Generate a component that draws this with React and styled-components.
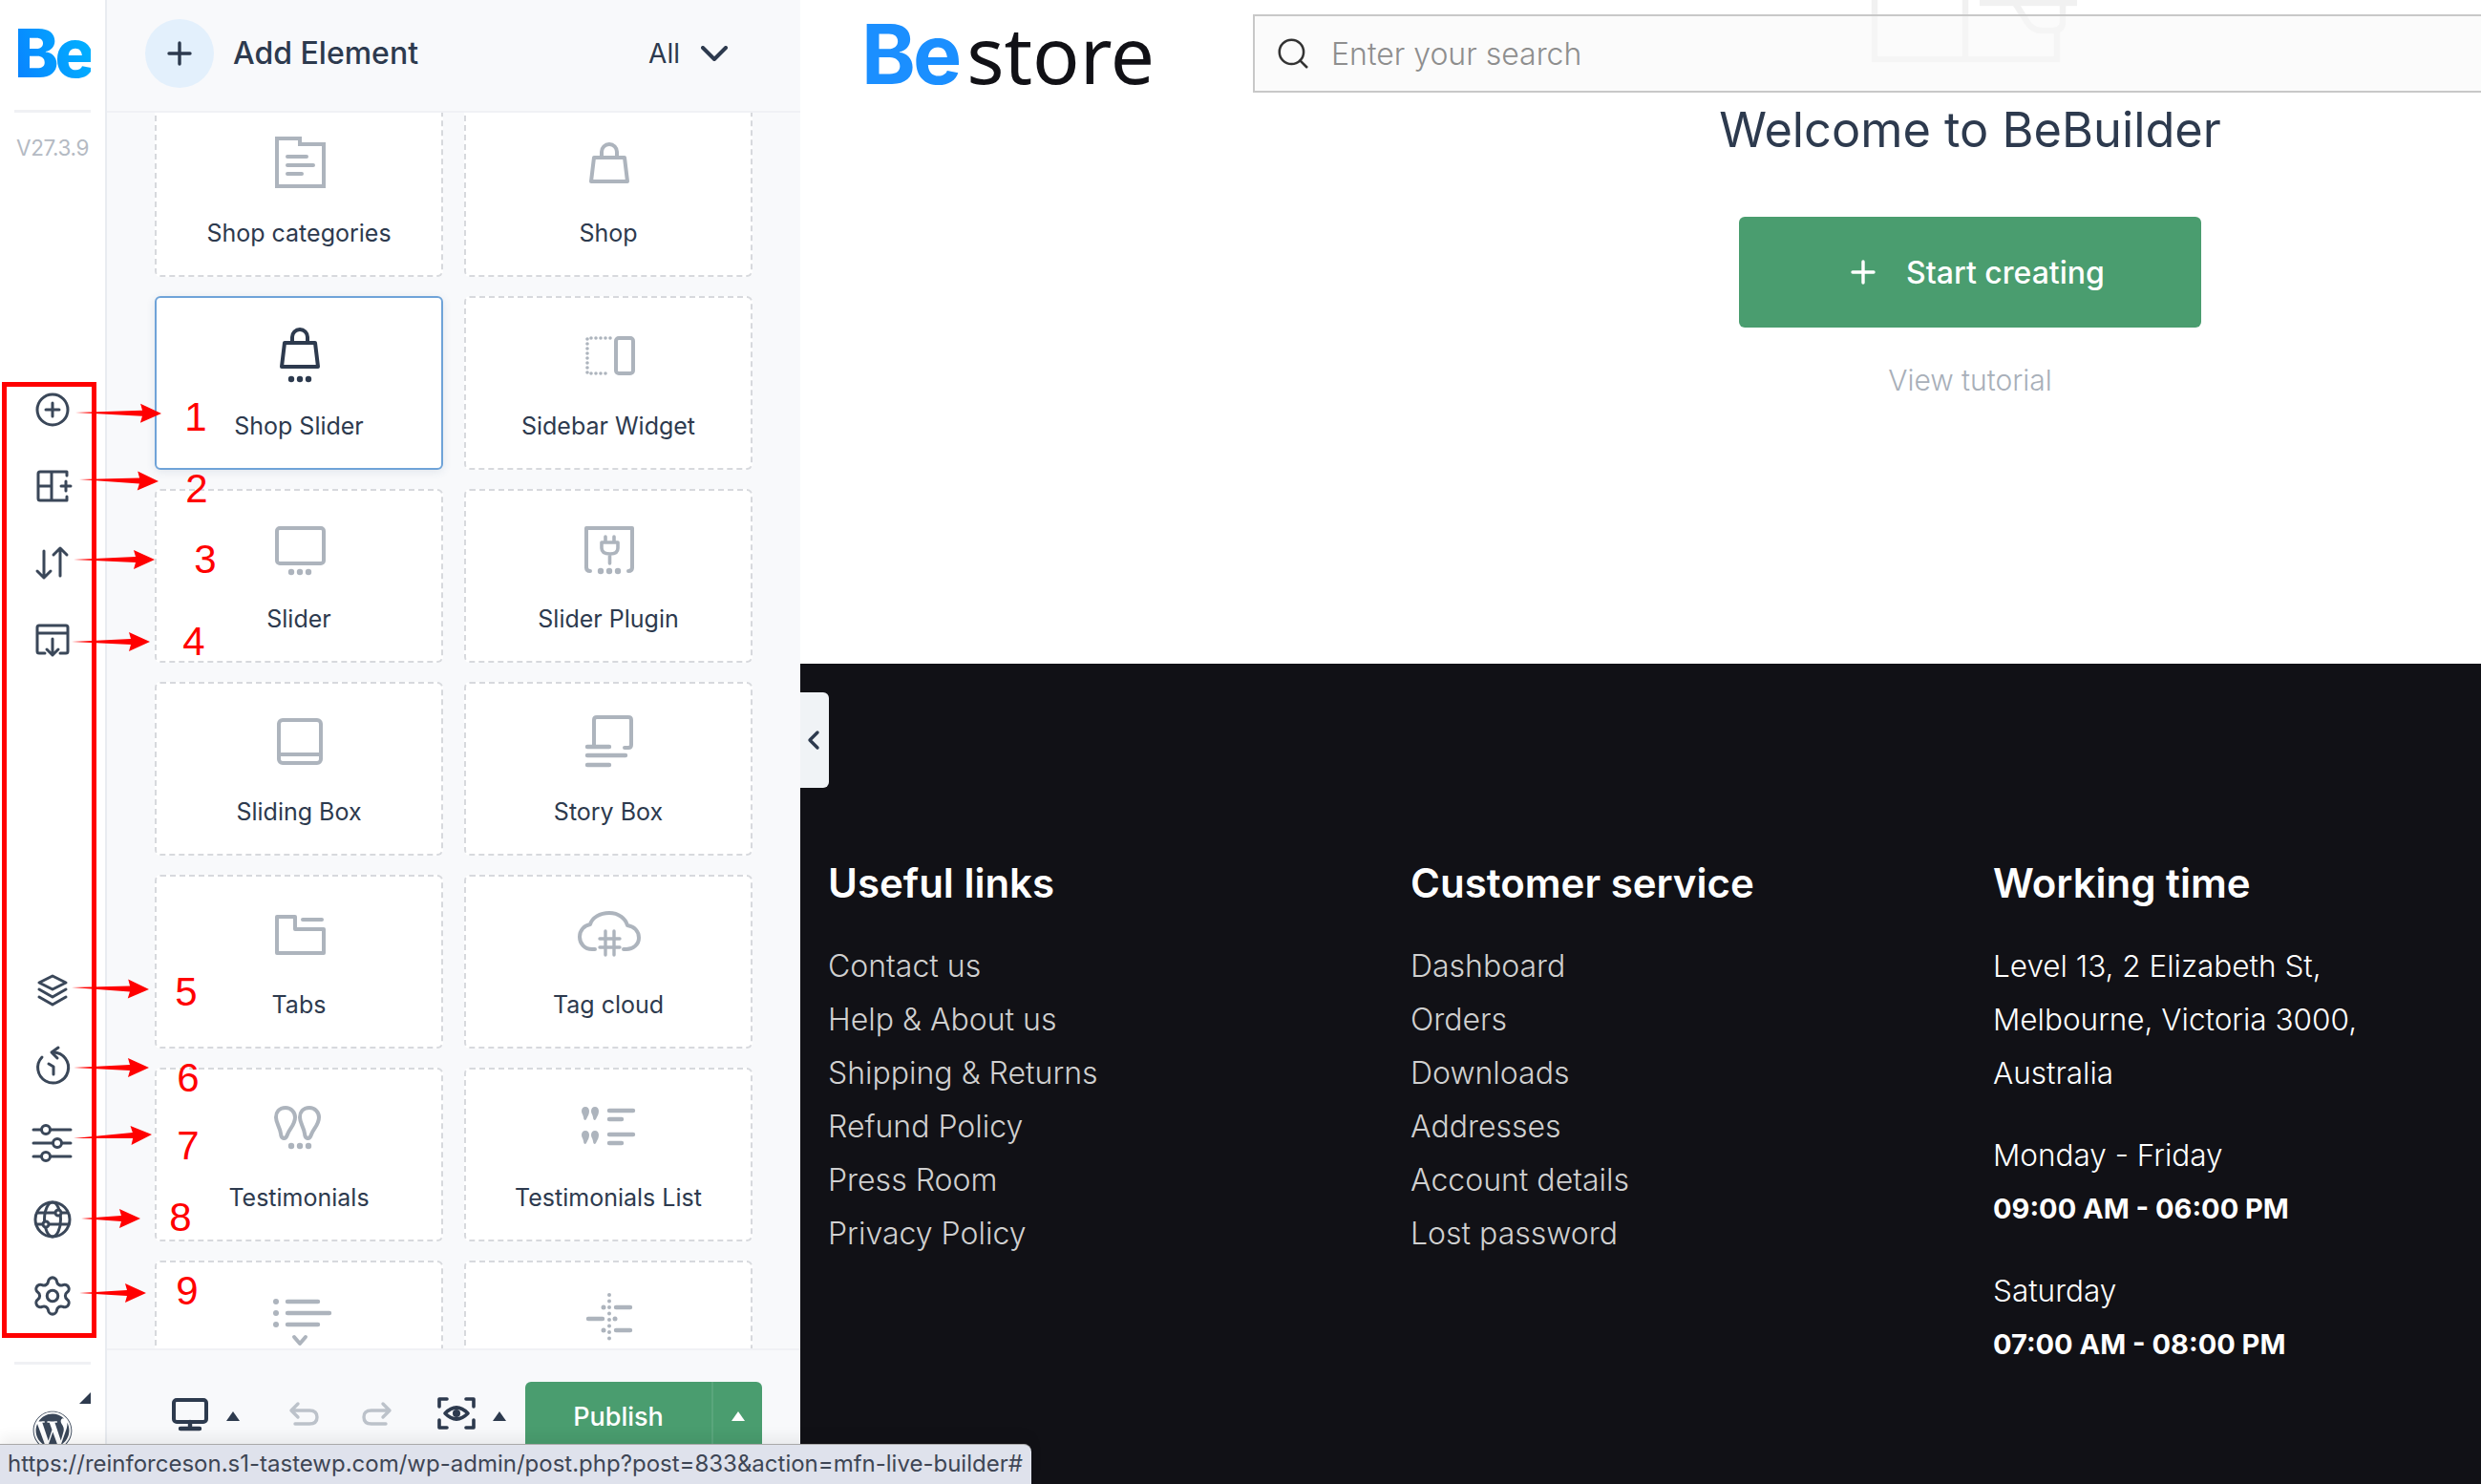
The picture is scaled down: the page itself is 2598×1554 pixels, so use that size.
import React from 'react';
import styled, { createGlobalStyle } from 'styled-components';
import { Settings, Search } from 'lucide-react';
import { FaWordpress } from 'react-icons/fa';

const GlobalStyle = createGlobalStyle`
  html, body {
    margin: 0;
    padding: 0;
    overflow: hidden;
    background: #fff;
  }
  body {
    font-family: Inter, "Noto Sans", sans-serif;
    color: #2d3a4e;
  }
  * {
    box-sizing: border-box;
  }
`;

const Page = styled.div`
  position: relative;
  display: flex;
  width: 2598px;
  height: 1554px;
  overflow: hidden;
`;

/* left icon rail */
const Rail = styled.aside`
  display: flex;
  flex-direction: column;
  align-items: center;
  flex: none;
  width: 112px;
  background: #fff;
  border-right: 2px solid #e9ecf1;
`;

const RailLogo = styled.div`
  width: 80px;
  height: 118px;
  padding-top: 14px;
  border-bottom: 3px solid #f0f1f4;
  text-align: center;
  font-size: 70px;
  line-height: 84px;
  font-weight: 800;
  letter-spacing: -4px;
  color: transparent;
  background: linear-gradient(70deg, #0a7cff, #00b6ff) content-box;
  background-clip: text;
  -webkit-background-clip: text;
`;

const Version = styled.div`
  margin-top: 23px;
  font-size: 22.5px;
  line-height: 28px;
  color: #b4bac3;
  letter-spacing: -0.4px;
`;

const RailGroup = styled.div`
  display: flex;
  flex-direction: column;
  margin-top: ${p => p.$top}px;
`;

const RailItem = styled.div`
  display: flex;
  align-items: center;
  justify-content: center;
  width: 80px;
  height: 80px;
  color: #3a4759;
`;

const RailDivider = styled.div`
  width: 80px;
  height: 3px;
  margin-top: 29px;
  background: #f0f1f4;
`;

const RailWp = styled.div`
  position: relative;
  display: flex;
  justify-content: center;
  width: 80px;
  margin-top: 48px;
  color: #3a4759;
`;

const CornerMark = styled.span`
  position: absolute;
  top: -19px;
  right: 0;
  border-style: solid;
  border-width: 0 12px 12px 0;
  border-color: transparent #2d3a4e transparent transparent;
  transform: rotate(90deg);
`;

/* element panel */
const Panel = styled.section`
  display: flex;
  flex-direction: column;
  flex: none;
  width: 726px;
  background: #f8f9fb;
`;

const PanelHeader = styled.header`
  display: flex;
  align-items: center;
  flex: none;
  height: 118px;
  padding: 0 76px 4px 40px;
  border-bottom: 2px solid #f0f1f5;
`;

const AddCircle = styled.span`
  display: flex;
  align-items: center;
  justify-content: center;
  width: 72px;
  height: 72px;
  border-radius: 50%;
  background: #e3f0fc;
`;

const PanelTitle = styled.span`
  margin-left: 20px;
  font-size: 32px;
  line-height: 44px;
  font-weight: 500;
  color: #2d3a4e;
`;

const FilterLabel = styled.span`
  margin-left: auto;
  font-size: 28px;
  line-height: 44px;
  color: #2d3a4e;
`;

const FilterChevron = styled.svg`
  margin-left: 22px;
`;

const ListViewport = styled.div`
  flex: 1;
  min-height: 0;
  overflow: hidden;
`;

const ElementGrid = styled.div`
  display: grid;
  grid-template-columns: repeat(2, 302px);
  grid-auto-rows: 182px;
  gap: 20px 22px;
  margin-top: -10px;
  padding-left: 50px;
`;

const ElementCard = styled.div`
  display: flex;
  flex-direction: column;
  align-items: center;
  padding-top: 30px;
  background: #fff;
  border-radius: 6px;
  border: 2px ${p => (p.$active ? 'solid #6fa3d8' : 'dashed #d7d9dd')};
  box-shadow: ${p => (p.$active ? '0 2px 10px rgba(60, 90, 130, 0.12)' : 'none')};
  color: ${p => (p.$active ? '#2d3a4e' : '#adb4bd')};
`;

const ElementLabel = styled.span`
  margin-top: 29px;
  font-size: 25px;
  line-height: 30px;
  color: #2d3a4e;
`;

const PanelFooter = styled.footer`
  display: flex;
  align-items: center;
  flex: none;
  height: 142px;
  padding: 34px 0 36px 68px;
  border-top: 2px solid #f0f1f5;
`;

const ToolButton = styled.span`
  display: flex;
  align-items: center;
  margin-left: ${p => p.$left || 0}px;
  color: ${p => (p.$muted ? '#bcc2ca' : '#2d3a4e')};
`;

const Caret = styled.span`
  display: block;
  width: 0;
  height: 0;
  margin-left: ${p => p.$left}px;
  border-style: solid;
  border-width: 0 7px 10px 7px;
  border-color: transparent transparent ${p => p.$color || '#2d3a4e'} transparent;
`;

const PublishGroup = styled.div`
  display: flex;
  align-items: stretch;
  width: 248px;
  height: 72px;
  margin-left: 20px;
  border-radius: 6px;
  background: #4a9d6f;
  color: #fff;
`;

const PublishLabel = styled.span`
  display: flex;
  align-items: center;
  justify-content: center;
  width: 195px;
  font-size: 27px;
  font-weight: 500;
`;

const PublishMenu = styled.span`
  display: flex;
  align-items: center;
  justify-content: center;
  flex: 1;
  border-left: 2px solid #5aa67c;
`;

/* site preview */
const Preview = styled.main`
  display: flex;
  flex-direction: column;
  flex: 1;
  min-width: 0;
`;

const Hero = styled.div`
  position: relative;
  flex: none;
  height: 695px;
  background: #fff;
`;

const SiteHeader = styled.div`
  display: flex;
  padding: 15px 0 0 64px;
`;

const SiteLogo = styled.div`
  flex: none;
  width: 410px;
  font-family: "Noto Sans", sans-serif;
  font-size: 82px;
  line-height: 82px;
  color: #111116;
`;

const LogoBe = styled.span`
  font-family: Inter, sans-serif;
  font-size: 86px;
  font-weight: 700;
  margin-right: 8px;
  letter-spacing: -3px;
  color: #1b8fff;
`;

const SearchBar = styled.div`
  position: relative;
  z-index: 1;
  display: flex;
  align-items: center;
  flex: none;
  width: 1340px;
  height: 82px;
  padding-left: 21px;
  background: rgba(248, 248, 248, 0.6);
  border: 2px solid #c8c8c8;
  color: #333;
`;

const SearchText = styled.span`
  margin-left: 21px;
  font-size: 32px;
  font-weight: 300;
  color: #8e8e8e;
`;

const Watermark = styled.svg`
  position: absolute;
  top: 0;
  left: 1112px;
  color: #f1f1f1;
`;

const HeroCopy = styled.div`
  display: flex;
  flex-direction: column;
  align-items: center;
  padding-left: 690px;
`;

const Welcome = styled.h1`
  margin: 0;
  font-size: 50.5px;
  line-height: 76px;
  font-weight: 400;
  color: #2d3a4e;
`;

const StartButton = styled.div`
  display: flex;
  align-items: center;
  justify-content: center;
  gap: 32px;
  width: 484px;
  height: 116px;
  margin-top: 53px;
  padding-left: 16px;
  border-radius: 6px;
  background: #4a9d6f;
  color: #fff;
  font-size: 32px;
  font-weight: 500;
`;

const TutorialLink = styled.div`
  margin-top: 31px;
  font-size: 30px;
  line-height: 48px;
  font-weight: 300;
  color: #a8afb9;
`;

const SiteFooter = styled.div`
  display: grid;
  grid-template-columns: repeat(3, 610px);
  flex: 1;
  padding: 200px 0 0 29px;
  background: #111116;
`;

const FooterHeading = styled.h4`
  margin: 0 0 29px;
  font-size: 42px;
  line-height: 60px;
  font-weight: 600;
  color: #fff;
`;

const FooterLink = styled.div`
  font-size: 32px;
  line-height: 56px;
  font-weight: 300;
  color: #d0d0d0;
`;

const FooterText = styled.div`
  margin-bottom: ${p => p.$gap || 0}px;
  font-size: ${p => (p.$strong ? 29 : 31.5)}px;
  line-height: 56px;
  font-weight: ${p => (p.$strong ? 700 : 300)};
  color: #fff;
`;

const CollapseHandle = styled.div`
  position: absolute;
  top: 725px;
  left: 838px;
  display: flex;
  align-items: center;
  justify-content: center;
  width: 30px;
  height: 100px;
  border-radius: 0 6px 6px 0;
  background: #f0f3f6;
  color: #2d3a4e;
`;

const StatusBar = styled.div`
  position: absolute;
  left: 0;
  bottom: 0;
  z-index: 5;
  width: 1080px;
  height: 42px;
  padding-left: 8px;
  border-top: 1px solid #a9a9a9;
  border-top-right-radius: 8px;
  background: #dfe2ec;
  box-shadow: 0 -8px 14px rgba(0, 0, 0, 0.06);
  font-size: 24px;
  line-height: 40px;
  white-space: nowrap;
  color: #3e4655;
`;

/* red markup drawn on top of the screenshot */
const MarkupBox = styled.div`
  position: absolute;
  top: 400px;
  left: 2px;
  z-index: 3;
  width: 99px;
  height: 1001px;
  border: 5px solid #ff0000;
`;

const MarkupArrows = styled.svg`
  position: absolute;
  top: 0;
  left: 0;
  z-index: 4;
`;

const MarkupNumber = styled.span`
  position: absolute;
  top: ${p => p.$y - 23}px;
  left: ${p => p.$x - 12}px;
  z-index: 4;
  width: 24px;
  font-family: "Liberation Sans", sans-serif;
  font-size: 42px;
  line-height: 46px;
  text-align: center;
  color: #ff0000;
`;

const Line = ({ size = 60, sw = 4, children, ...rest }) => (
  <svg width={size} height={size} viewBox={`0 0 ${size} ${size}`} fill="none" stroke="currentColor" strokeWidth={sw} strokeLinecap="round" strokeLinejoin="round" style={{ overflow: 'visible', flex: 'none' }} {...rest}>
    {children}
  </svg>
);

const Dots = ({ y = 55 }) => (
  <g fill="currentColor" stroke="none">
    <circle cx="22" cy={y} r="3.2" />
    <circle cx="31" cy={y} r="3.2" />
    <circle cx="40" cy={y} r="3.2" />
  </g>
);

const Bag = () => (
  <>
    <path d="M15 17H47L50 42H12Z" />
    <path d="M23 17V11a8 8 0 0 1 16 0V17" />
  </>
);

const Quote = ({ x, y }) => (
  <path transform={`translate(${x} ${y})`} d="M4 0C1.500 0 0 2 0 4.500C0 7 1.500 8 2 11C2.200 14.500 4.500 15 5.500 12C6.500 9.500 8 8 8 4.500C8 2 6.500 0 4 0Z" fill="currentColor" stroke="none" />
);

const elementIcons = {
  categories: (
    <Line>
      <path d="M7 5H31V11H56V55H7Z" strokeLinejoin="miter" />
      <path d="M18 24H38M18 33H45M18 42H33" />
    </Line>
  ),
  shop: <Line><g transform="translate(0 8)"><Bag /></g></Line>,
  shopSlider: <Line><Bag /><Dots /></Line>,
  sidebar: (
    <Line>
      <rect x="38" y="12" width="18" height="37" rx="3" />
      <path d="M32 12H8V49H32" strokeWidth="3.6" strokeDasharray="0 5" />
    </Line>
  ),
  slider: (
    <Line>
      <rect x="7" y="9" width="49" height="37" rx="3" />
      <Dots />
    </Line>
  ),
  sliderPlugin: (
    <Line>
      <path d="M7 50V9H55V50" />
      <path d="M7 50Q7 54 11 54M55 50Q55 54 51 54" />
      <path d="M27 18V24M36 18V24M23 24H40V30Q40 36 32 36Q23 36 23 30ZM31.500 36V46" strokeWidth="3.6" />
      <g fill="currentColor" stroke="none">
        <circle cx="22" cy="54" r="3.2" />
        <circle cx="31" cy="54" r="3.2" />
        <circle cx="40" cy="54" r="3.2" />
      </g>
    </Line>
  ),
  slidingBox: (
    <Line>
      <rect x="9" y="8" width="44" height="45" rx="4" />
      <path d="M9 44H53" />
    </Line>
  ),
  storyBox: (
    <Line>
      <path d="M15 34V8Q15 5 18 5H51Q54 5 54 8V34Q54 37 51 37H47" />
      <path d="M8 36H31M8 45H48M8 55H31" strokeWidth="4.4" />
    </Line>
  ),
  tabs: (
    <Line>
      <path d="M7 12H26V25H56V50H7Z" />
      <path d="M34 15H54" />
    </Line>
  ),
  tagCloud: (
    <Line>
      <path d="M16 46H13C5 46 0 40 0 33C0 26 5 21 11 20C13 13 21 8 31 8C41 8 48 14 50 21C57 22 62 27 62 34C62 41 56 46 49 46H46" />
      <path d="M27 27V52M36 27V52M21 35H42M21 44H42" strokeWidth="3.4" />
    </Line>
  ),
  testimonials: (
    <Line>
      <path d="M16 10C9 10 6 15 6 20C6 26 10 30 11 37C11.500 43 16 44 18 38C20 32 26 28 26 20C26 15 22 10 16 10Z" />
      <path d="M41 10C34 10 31 15 31 20C31 26 35 30 36 37C36.500 43 41 44 43 38C45 32 51 28 51 20C51 15 47 10 41 10Z" />
      <Dots y={50} />
    </Line>
  ),
  testimonialsList: (
    <Line>
      <Quote x={2} y={9} />
      <Quote x={12} y={9} />
      <Quote x={2} y={34} />
      <Quote x={12} y={34} />
      <path d="M31 13H56M31 22H44M31 38H56M31 47H44" strokeWidth="4.4" />
    </Line>
  ),
  toggle: (
    <Line>
      <path d="M18 11H50M18 23H62M18 35H50" strokeWidth="4.4" />
      <g fill="currentColor" stroke="none">
        <circle cx="6" cy="11" r="3" />
        <circle cx="6" cy="23" r="3" />
        <circle cx="6" cy="35" r="3" />
      </g>
      <path d="M25 48L31 55L37 48" />
    </Line>
  ),
  timeline: (
    <Line>
      <path d="M31 4V56" strokeWidth="4" strokeDasharray="0 6.500" />
      <path d="M38 17H53M9 29H24M38 41H53" strokeWidth="4.400" />
      <g fill="currentColor" stroke="none">
        <circle cx="25" cy="17" r="2.500" />
        <circle cx="37" cy="29" r="2.500" />
        <circle cx="25" cy="41" r="2.500" />
      </g>
    </Line>
  ),
};

// the last two cards are cut by the panel footer before their labels start
const elements = [
  { id: 'categories', label: 'Shop categories' },
  { id: 'shop', label: 'Shop' },
  { id: 'shopSlider', label: 'Shop Slider', active: true },
  { id: 'sidebar', label: 'Sidebar Widget' },
  { id: 'slider', label: 'Slider' },
  { id: 'sliderPlugin', label: 'Slider Plugin' },
  { id: 'slidingBox', label: 'Sliding Box' },
  { id: 'storyBox', label: 'Story Box' },
  { id: 'tabs', label: 'Tabs' },
  { id: 'tagCloud', label: 'Tag cloud' },
  { id: 'testimonials', label: 'Testimonials' },
  { id: 'testimonialsList', label: 'Testimonials List' },
  { id: 'toggle' },
  { id: 'timeline' },
];

const RailIcon = ({ children }) => <Line size={40} sw={3}>{children}</Line>;

const railTop = [
  <RailIcon><circle cx="20" cy="20" r="16" /><path d="M13 20H27M20 13V27" /></RailIcon>,
  <RailIcon>
    <path d="M35 5H7Q5 5 5 7V33Q5 35 7 35H35M19 5V35M5 20H19M35 5V9M35 31V35" />
    <path d="M29 20H39M34 15V25" />
  </RailIcon>,
  <RailIcon><path d="M11 8V36M4 29L11 36L18 29M28 34V5M21 12L28 5L35 12" /></RailIcon>,
  <RailIcon>
    <path d="M12 35H6Q4 35 4 33V8Q4 6 6 6H34Q36 6 36 8V33Q36 35 34 35H28M4 14H36M20 20V37M14 31L20 37L26 31" />
  </RailIcon>,
];

const railBottom = [
  <RailIcon>
    <path d="M20 5L34 12L20 19L6 12Z" />
    <path d="M6 19L20 27L34 19M6 27L20 35L34 27" />
  </RailIcon>,
  <RailIcon>
    <path d="M21 5A16 16 0 1 1 9 10" />
    <path d="M26 0L19 5L25 11M16 17L21 20V28" />
  </RailIcon>,
  <RailIcon>
    <path d="M0 6H8M18 6H39M0 20H20M30 20H39M0 34H8M18 34H39" />
    <circle cx="13" cy="6" r="4.500" />
    <circle cx="25" cy="20" r="4.500" />
    <circle cx="13" cy="34" r="4.500" />
  </RailIcon>,
  <RailIcon>
    <circle cx="20" cy="20" r="18" />
    <ellipse cx="20" cy="20" rx="8.500" ry="18" />
    <path d="M4 13H36M3 25H37" />
    <circle cx="26" cy="13" r="3" fill="#fff" />
    <circle cx="13" cy="25" r="3" fill="#fff" />
  </RailIcon>,
  <Settings size={46} strokeWidth={1.6} />,
];

const arrows = [
  [79, 432, 169, 433],
  [83, 502, 166, 504],
  [77, 586, 162, 586],
  [75, 672, 157, 672],
  [75, 1034, 156, 1036],
  [77, 1118, 156, 1118],
  [77, 1192, 159, 1188],
  [85, 1276, 147, 1276],
  [83, 1354, 153, 1354],
];

const numbers = [
  ['1', 205, 437],
  ['2', 206, 512],
  ['3', 215, 586],
  ['4', 203, 672],
  ['5', 195, 1039],
  ['6', 197, 1129],
  ['7', 197, 1200],
  ['8', 189, 1275],
  ['9', 196, 1352],
];

// turns a tail and a tip into the tapered arrow outline
const arrowPoints = ([x1, y1, x2, y2]) => {
  const len = Math.hypot(x2 - x1, y2 - y1);
  const ux = (x2 - x1) / len;
  const uy = (y2 - y1) / len;
  const at = (along, side) => `${x1 + ux * along - uy * side},${y1 + uy * along + ux * side}`;
  const neck = len - 20;
  return [at(0, 0), at(neck, -3), at(neck - 2, -10), at(len, 0), at(neck - 2, 10), at(neck, 3)].join(' ');
};

const columns = [
  { title: 'Useful links', links: ['Contact us', 'Help & About us', 'Shipping & Returns', 'Refund Policy', 'Press Room', 'Privacy Policy'] },
  { title: 'Customer service', links: ['Dashboard', 'Orders', 'Downloads', 'Addresses', 'Account details', 'Lost password'] },
];

const App = () => (
  <>
    <GlobalStyle />
    <Page>
      <Rail>
        <RailLogo>Be</RailLogo>
        <Version>V27.3.9</Version>
        <RailGroup $top={220}>
          {railTop.map((icon, i) => <RailItem key={i}>{icon}</RailItem>)}
        </RailGroup>
        <RailGroup $top={288}>
          {railBottom.map((icon, i) => <RailItem key={i}>{icon}</RailItem>)}
        </RailGroup>
        <RailDivider />
        <RailWp>
          <CornerMark />
          <FaWordpress size={42} />
        </RailWp>
      </Rail>

      <Panel>
        <PanelHeader>
          <AddCircle>
            <Line size={28} sw={3.4}><path d="M14 3V25M3 14H25" /></Line>
          </AddCircle>
          <PanelTitle>Add Element</PanelTitle>
          <FilterLabel>All</FilterLabel>
          <FilterChevron width="28" height="16" viewBox="0 0 28 16" fill="none" stroke="#2d3a4e" strokeWidth="4" strokeLinecap="round" strokeLinejoin="round">
            <path d="M2 2L14 14L26 2" />
          </FilterChevron>
        </PanelHeader>

        <ListViewport>
          <ElementGrid>
            {elements.map(el => (
              <ElementCard key={el.id} $active={el.active}>
                {elementIcons[el.id]}
                {el.label && <ElementLabel>{el.label}</ElementLabel>}
              </ElementCard>
            ))}
          </ElementGrid>
        </ListViewport>

        <PanelFooter>
          <ToolButton>
            <Line size={38} sw={4}>
              <rect x="2" y="2" width="34" height="23" rx="3" />
              <path d="M19 25V31M9 32H29" strokeWidth="4.400" />
            </Line>
          </ToolButton>
          <Caret $left={19} />
          <ToolButton $muted $left={52}>
            <Line size={30} sw={3.4}>
              <path d="M2 9H21Q29 9 29 16T21 23H6M9 2L2 9L9 16" />
            </Line>
          </ToolButton>
          <ToolButton $muted $left={46}>
            <Line size={30} sw={3.4}>
              <path d="M29 9H10Q2 9 2 16T10 23H25M22 2L29 9L22 16" />
            </Line>
          </ToolButton>
          <ToolButton $left={49}>
            <Line size={40} sw={3.6}>
              <path d="M2 10V2H10M30 2H38V10M2 24V32H10M30 32H38V24" />
              <path d="M8 17Q20 5 32 17Q20 29 8 17Z" />
              <circle cx="20" cy="17" r="4" fill="currentColor" stroke="none" />
            </Line>
          </ToolButton>
          <Caret $left={18} />
          <PublishGroup>
            <PublishLabel>Publish</PublishLabel>
            <PublishMenu><Caret $left={0} $color="#fff" /></PublishMenu>
          </PublishGroup>
        </PanelFooter>
      </Panel>

      <Preview>
        <Hero>
          <Watermark width="240" height="70" viewBox="0 0 240 70" fill="none" stroke="currentColor" strokeWidth="6.500">
            <path d="M13 -10V62H108V-10M108 62H204V34" />
            <path d="M123 3H225M160 3L172 22Q178 32 188 32H200Q210 32 210 22V3" />
          </Watermark>
          <SiteHeader>
            <SiteLogo><LogoBe>Be</LogoBe>store</SiteLogo>
            <SearchBar>
              <Search size={38} strokeWidth={1.6} />
              <SearchText>Enter your search</SearchText>
            </SearchBar>
          </SiteHeader>
          <HeroCopy>
            <Welcome>Welcome to BeBuilder</Welcome>
            <StartButton>
              <Line size={26} sw={3.4}><path d="M13 2V24M2 13H24" /></Line>
              <span>Start creating</span>
            </StartButton>
            <TutorialLink>View tutorial</TutorialLink>
          </HeroCopy>
        </Hero>

        <SiteFooter>
          {columns.map(col => (
            <div key={col.title}>
              <FooterHeading>{col.title}</FooterHeading>
              {col.links.map(link => <FooterLink key={link}>{link}</FooterLink>)}
            </div>
          ))}
          <div>
            <FooterHeading>Working time</FooterHeading>
            <FooterText>Level 13, 2 Elizabeth St,</FooterText>
            <FooterText>Melbourne, Victoria 3000,</FooterText>
            <FooterText $gap={30}>Australia</FooterText>
            <FooterText>Monday - Friday</FooterText>
            <FooterText $strong $gap={30}>09:00 AM - 06:00 PM</FooterText>
            <FooterText>Saturday</FooterText>
            <FooterText $strong>07:00 AM - 08:00 PM</FooterText>
          </div>
        </SiteFooter>
      </Preview>

      <CollapseHandle>
        <Line size={16} sw={3.4}><path d="M11 0L3 8L11 16" /></Line>
      </CollapseHandle>

      <MarkupBox />
      <MarkupArrows width="230" height="1554" viewBox="0 0 230 1554" fill="#ff0000">
        {arrows.map((a, i) => <polygon key={i} points={arrowPoints(a)} />)}
      </MarkupArrows>
      {numbers.map(([n, x, y]) => <MarkupNumber key={n} $x={x} $y={y}>{n}</MarkupNumber>)}

      <StatusBar>https://reinforceson.s1-tastewp.com/wp-admin/post.php?post=833&amp;action=mfn-live-builder#</StatusBar>
    </Page>
  </>
);

export default App;
